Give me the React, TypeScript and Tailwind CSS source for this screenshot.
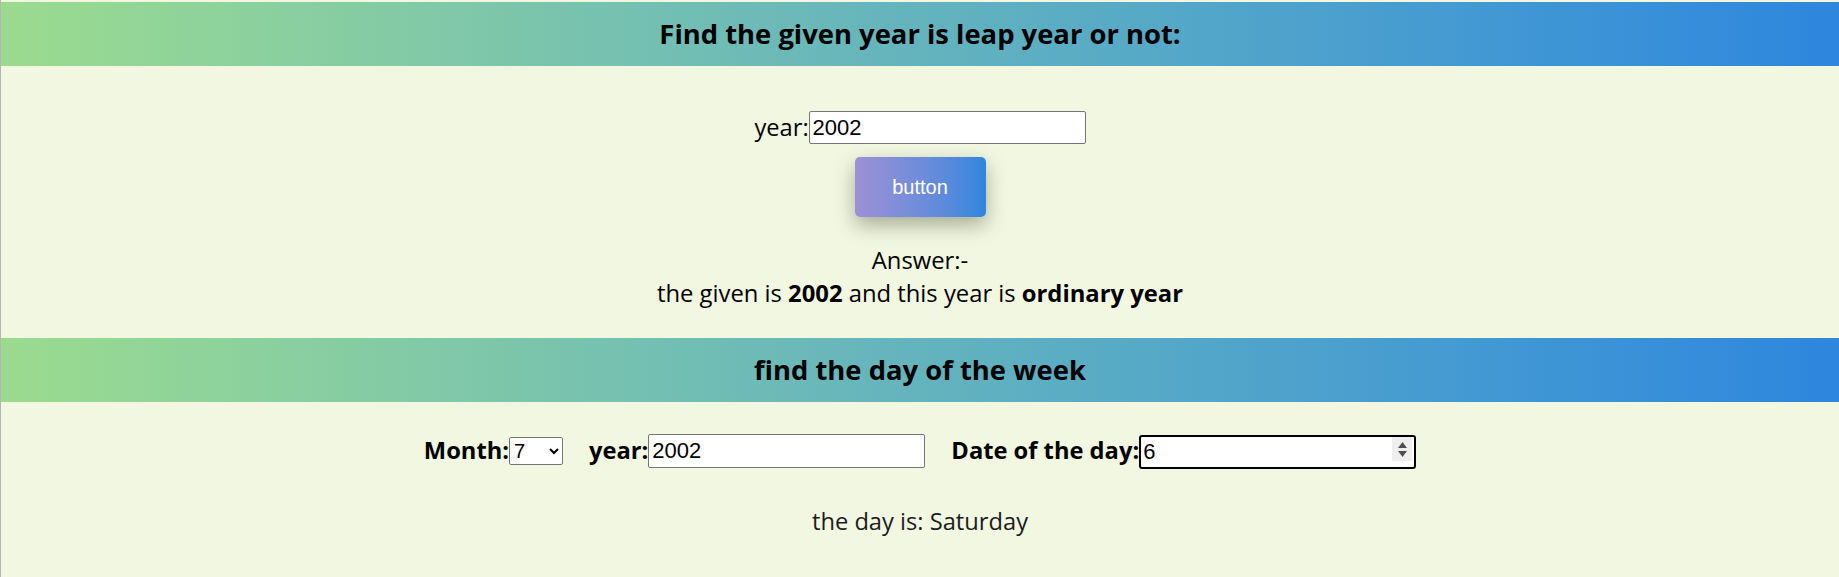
import { useState } from 'react';

function Spinner() {
  return (
    <div className="pointer-events-none absolute right-[4px] top-[4px] flex h-[24px] w-[20px] flex-col items-center justify-center gap-[3px] bg-[#efefef]">
      <svg width="9" height="6" viewBox="0 0 9 6">
        <path d="M4.5 0 L9 6 L0 6 Z" fill="#505050" />
      </svg>
      <svg width="9" height="6" viewBox="0 0 9 6">
        <path d="M0 0 L9 0 L4.5 6 Z" fill="#505050" />
      </svg>
    </div>
  );
}

export default function App() {
  const [year, setYear] = useState('2002');
  const [month, setMonth] = useState('7');
  const [year2, setYear2] = useState('2002');
  const [day, setDay] = useState('6');

  const inputCls =
    "h-[33px] w-[277px] rounded-[2px] border border-[#767676] bg-white px-[3px] font-['Liberation_Sans',Arial,sans-serif] text-[22px] text-black outline-none";

  return (
    <div className="min-h-[577px] border-l border-[#b5b5b5] bg-[#f2f7e2] pt-[2px] font-['Open_Sans',sans-serif] text-black">
      <h2 className="flex h-[64px] items-center justify-center bg-linear-to-r from-[#9bdb8e] to-[#2e86de] text-[27.4px] font-bold">
        Find the given year is leap year or not:
      </h2>

      <div className="flex flex-col items-center">
        <div className="mt-[45px] flex items-center">
          <label className="text-[23.7px] leading-none">year:</label>
          <input className={inputCls} value={year} onChange={(e) => setYear(e.target.value)} />
        </div>

        <button className="mt-[13px] h-[60px] w-[131px] rounded-[5px] bg-linear-to-r from-[#9d90d6] to-[#2e86de] font-['Liberation_Sans',Arial,sans-serif] text-[20px] text-white shadow-[0_8px_20px_rgba(50,60,30,0.4)]">
          button
        </button>

        <div className="mt-[27px] text-center text-[23.8px] leading-[33px]">
          <div>Answer:-</div>
          <div>
            the given is <b>2002</b> and this year is <b>ordinary year</b>
          </div>
        </div>
      </div>

      <h2 className="mt-[28px] flex h-[64px] items-center justify-center bg-linear-to-r from-[#9bdb8e] to-[#2e86de] text-[27.4px] font-bold">
        find the day of the week
      </h2>

      <div className="mt-[31px] flex items-center justify-center gap-[26px] text-[23.7px] font-bold">
        <div className="flex items-center">
          <label>Month:</label>
          <select
            className="h-[28px] w-[54px] rounded-[2px] border border-[#767676] bg-white font-['Liberation_Sans',Arial,sans-serif] text-[20px] font-normal"
            value={month}
            onChange={(e) => setMonth(e.target.value)}
          >
            {Array.from({ length: 12 }, (_, i) => (
              <option key={i} value={String(i + 1)}>
                {i + 1}
              </option>
            ))}
          </select>
        </div>
        <div className="flex items-center">
          <label>year:</label>
          <input
            className={inputCls + ' h-[34px] font-normal'}
            value={year2}
            onChange={(e) => setYear2(e.target.value)}
          />
        </div>
        <div className="flex items-center">
          <label>Date of the day:</label>
          <div className="relative">
            <input
              className="h-[34px] w-[277px] rounded-[3px] border-2 border-black bg-white px-[2px] font-['Liberation_Sans',Arial,sans-serif] text-[22px] font-normal text-black outline-none"
              value={day}
              onChange={(e) => setDay(e.target.value)}
            />
            <Spinner />
          </div>
        </div>
      </div>

      <p className="mt-[36px] text-center text-[23.7px] leading-[33px] text-[#1c1c1c]">the day is: Saturday</p>
    </div>
  );
}
